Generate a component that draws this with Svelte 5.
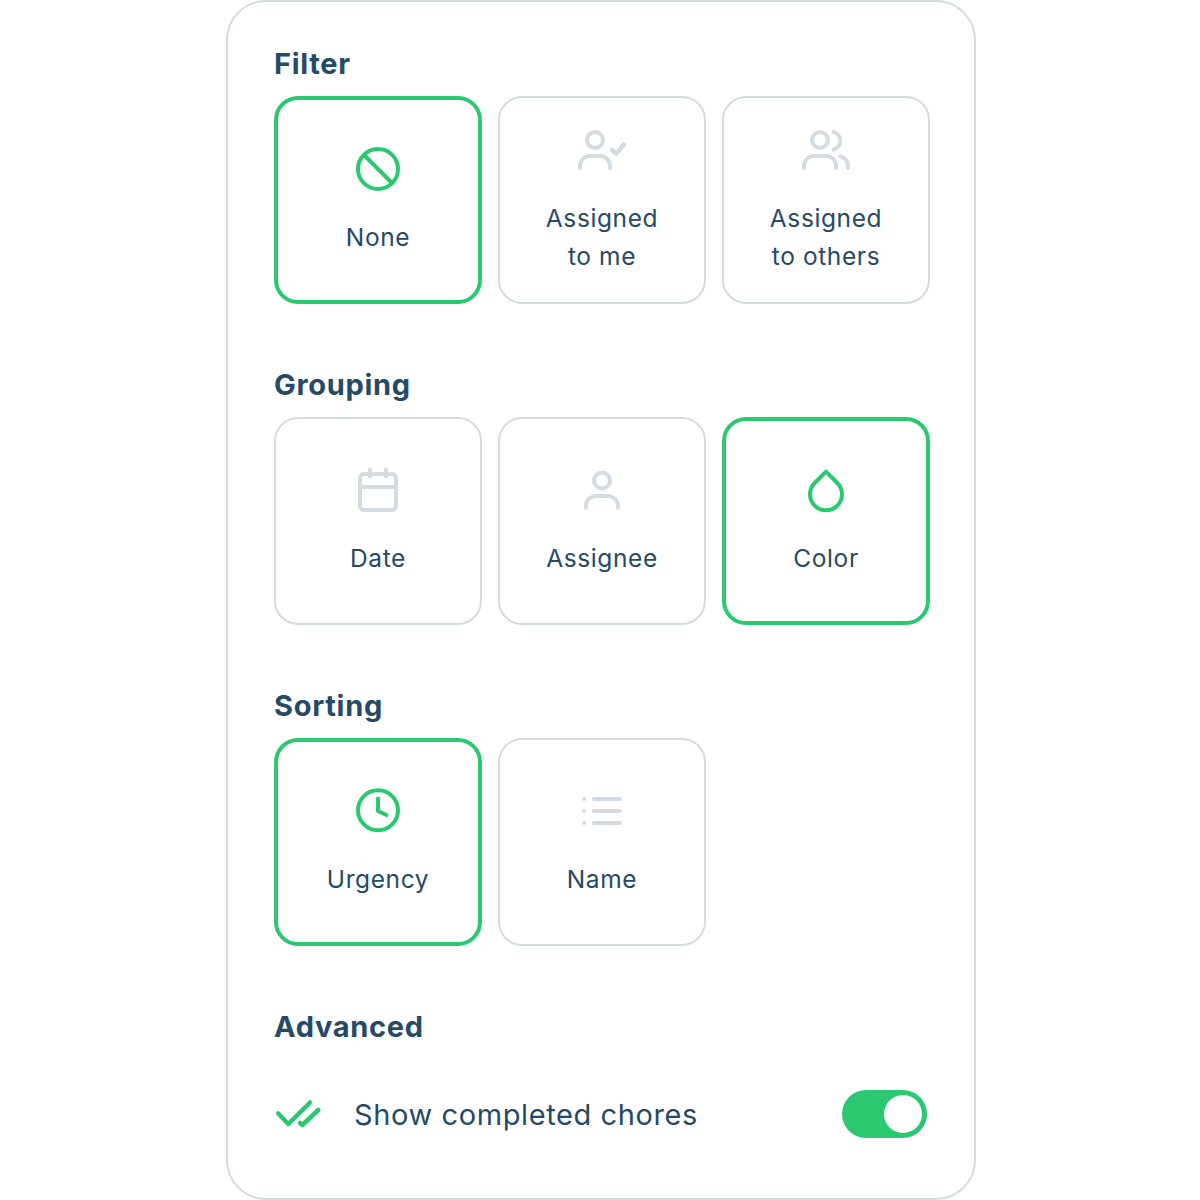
<script>
  const sections = [
    { title: 'Filter', cards: [
      { id: 'none', lines: ['None'], active: true },
      { id: 'me', lines: ['Assigned', 'to me'] },
      { id: 'others', lines: ['Assigned', 'to others'] }
    ]},
    { title: 'Grouping', cards: [
      { id: 'date', lines: ['Date'] },
      { id: 'assignee', lines: ['Assignee'] },
      { id: 'color', lines: ['Color'], active: true }
    ]},
    { title: 'Sorting', cards: [
      { id: 'urgency', lines: ['Urgency'], active: true },
      { id: 'name', lines: ['Name'] }
    ]}
  ];
</script>

<div class="panel">
  {#each sections as s}
    <section class="section">
      <h2>{s.title}</h2>
      <div class="grid">
        {#each s.cards as c}
          <div class="card" class:active={c.active}>
            <svg class="icon" viewBox="0 0 64 48" width="64" height="48" fill="none" stroke="currentColor" stroke-width="4" stroke-linecap="round" stroke-linejoin="round">
              {#if c.id === 'none'}
                <circle cx="32" cy="24" r="20" /><path d="M18 10 46 38" stroke-linecap="butt" />
              {:else if c.id === 'me'}
                <circle cx="25" cy="14" r="8" /><path d="M10 42v-2a10 10 0 0 1 10-10h10a10 10 0 0 1 10 10v2" /><path d="M42 24l4.500 3.500 7.500-9" stroke-width="4.500" />
              {:else if c.id === 'others'}
                <circle cx="26" cy="14" r="8" /><path d="M10 42v-2a10 10 0 0 1 10-10h12a10 10 0 0 1 10 10v2" /><path d="M39.500 6a9 9 0 0 1 0 17.500" /><path d="M46.500 30.500c4.500 1 7.500 5 7.500 9v2.500" />
              {:else if c.id === 'date'}
                <rect x="14" y="8" width="36" height="36" rx="4" /><path d="M14 21h36M24 3.500v7M40 3.500v7" />
              {:else if c.id === 'assignee'}
                <circle cx="32" cy="14.500" r="8" /><path d="M16 42v-2a10 10 0 0 1 10-10h12a10 10 0 0 1 10 10v2" />
              {:else if c.id === 'color'}
                <path d="M32 5.700 20.700 17a16 16 0 1 0 22.600 0Z" />
              {:else if c.id === 'urgency'}
                <circle cx="32" cy="23.300" r="20" /><path d="M32 11.500V24l8.500 4" />
              {:else if c.id === 'name'}
                <path d="M24 12h26M24 24h26M24 36h26" /><path d="M14 12h.01M14 24h.01M14 36h.01" />
              {/if}
            </svg>
            <div class="label">
              {#each c.lines as l}<div>{l}</div>{/each}
            </div>
          </div>
        {/each}
      </div>
    </section>
  {/each}
  <section class="section advanced">
    <h2>Advanced</h2>
    <div class="row">
      <svg class="check" viewBox="0 0 48 48" width="48" height="48" fill="none" stroke="currentColor" stroke-width="4.500" stroke-linecap="round" stroke-linejoin="round">
        <path d="M4.300 23.500 14.300 34 36 12.500" /><path d="M26 32.800 28.300 35 44.300 20" />
      </svg>
      <span class="row-text">Show completed chores</span>
      <div class="toggle"><span class="knob"></span></div>
    </div>
  </section>
</div>

<style>
  :global(body) { background: #fff; }
  .panel {
    box-sizing: border-box;
    width: 750px;
    height: 1200px;
    margin-left: 226px;
    padding: 46px 46px 0;
    border: 2px solid #d4dce2;
    border-radius: 40px;
    background: #fff;
    font-family: Inter, "Noto Sans", sans-serif;
    color: #264a66;
    display: flex;
    flex-direction: column;
    gap: 65px;
  }
  h2 {
    margin: 0 0 16px;
    font-size: 29px;
    line-height: 32px;
    font-weight: 700;
    letter-spacing: 0.7px;
  }
  .grid {
    display: grid;
    grid-template-columns: repeat(3, 208px);
    gap: 16px;
  }
  .card {
    box-sizing: border-box;
    height: 208px;
    border: 2px solid #d4dce2;
    border-radius: 24px;
    display: flex;
    flex-direction: column;
    align-items: center;
    justify-content: center;
    gap: 24px;
  }
  .card.active {
    border: 4px solid #2ac96f;
  }
  .icon { display: block; color: #d4dce2; }
  .active .icon { color: #2ac96f; }
  .label {
    font-size: 24.500px;
    line-height: 38px;
    letter-spacing: 0.6px;
    text-align: center;
    padding-top: 1px;
    margin-bottom: -1px;
  }
  .advanced h2 { margin-bottom: 47px; }
  .row {
    display: flex;
    align-items: center;
    height: 48px;
    padding-right: 1px;
  }
  .check { color: #2ac96f; display: block; }
  .row-text {
    margin-left: 32px;
    font-size: 29px;
    letter-spacing: 0.6px;
    flex: 1;
  }
  .toggle {
    position: relative;
    width: 85px;
    height: 48px;
    border-radius: 24px;
    background: #2ac96f;
  }
  .knob {
    position: absolute;
    right: 5px;
    top: 5px;
    width: 38px;
    height: 38px;
    border-radius: 50%;
    background: #fff;
  }
</style>
